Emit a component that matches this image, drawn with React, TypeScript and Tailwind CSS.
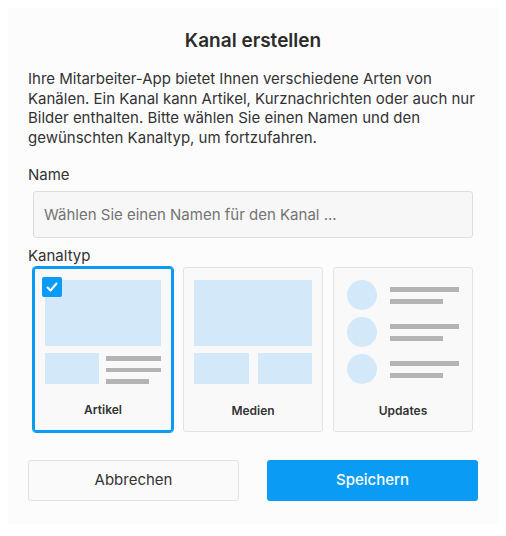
import React from 'react';

const Bar = ({ w }: { w: string }) => <div className={`h-[5px] bg-[#b4b4b4] ${w}`} />;

const ArtikelPreview = () => (
  <div className="flex flex-col gap-[7px]">
    <div className="h-[66px] bg-[#d3e8f8]" />
    <div className="flex gap-[7px] h-[31px]">
      <div className="w-[54px] bg-[#d3e8f8]" />
      <div className="flex-1 flex flex-col gap-[7px] pt-[3px]">
        <Bar w="w-full" />
        <Bar w="w-full" />
        <Bar w="w-[43px]" />
      </div>
    </div>
  </div>
);

const MedienPreview = () => (
  <div className="flex flex-col gap-[7px]">
    <div className="h-[66px] bg-[#d3e8f8]" />
    <div className="flex gap-[9px] h-[31px]">
      <div className="flex-1 bg-[#d3e8f8]" />
      <div className="flex-1 bg-[#d3e8f8]" />
    </div>
  </div>
);

const UpdatesPreview = () => (
  <div className="flex flex-col gap-[7px] pl-[3px] h-[104px]">
    {[0, 1, 2].map((i) => (
      <div key={i} className="flex items-start gap-[13px] h-[30px]">
        <div className="w-[30px] h-[30px] rounded-full bg-[#d3e8f8]" />
        <div className="flex flex-col gap-[7px] pt-[7px]">
          <Bar w="w-[69px]" />
          <Bar w="w-[53px]" />
        </div>
      </div>
    ))}
  </div>
);

export default function App() {
  const cards = [
    { label: 'Artikel', preview: <ArtikelPreview />, selected: true },
    { label: 'Medien', preview: <MedienPreview />, selected: false },
    { label: 'Updates', preview: <UpdatesPreview />, selected: false },
  ];

  return (
    <div className="w-[506px] h-[536px] bg-white p-2 font-['Inter',sans-serif] text-[#333]">
      <div className="w-[490px] h-[516px] bg-[#fcfcfc] px-5 pt-[21px]">
        <h1 className="text-center text-[19px] leading-6 font-semibold text-[#2b2b2b]">Kanal erstellen</h1>

        <p className="mt-4 text-[15px] leading-[19.5px] whitespace-nowrap">
          Ihre Mitarbeiter-App bietet Ihnen verschiedene Arten von
          <br />
          Kanälen. Ein Kanal kann Artikel, Kurznachrichten oder auch nur
          <br />
          Bilder enthalten. Bitte wählen Sie einen Namen und den
          <br />
          gewünschten Kanaltyp, um fortzufahren.
        </p>

        <div className="mt-[18px] text-[15px] leading-5">Name</div>
        <div className="mx-[5px] mt-[6px]">
          <input
            className="w-full h-[47px] rounded-[3px] border border-[#dedede] bg-[#f7f7f7] px-[10px] text-[15px] outline-none placeholder:text-[#737373]"
            placeholder="Wählen Sie einen Namen für den Kanal ..."
          />
        </div>

        <div className="mt-2 text-[15px] leading-5">Kanaltyp</div>
        <div className="mx-[5px] mt-px grid grid-cols-3 gap-[10px]">
          {cards.map((card) => (
            <div
              key={card.label}
              className={`relative h-[165px] rounded-[3px] bg-[#f9f9f9] px-[10px] pt-3 flex flex-col ${
                card.selected ? 'border-[2px] border-[#0a9cf5] outline outline-1 outline-[#0a9cf5] px-[9px] pt-[11px]' : 'border border-[#e2e2e2]'
              }`}
            >
              {card.preview}
              <div className="mt-auto mb-[11px] text-center text-[12px] font-semibold text-[#333]">{card.label}</div>
              {card.selected && (
                <div className="absolute left-[7px] top-[8px] w-5 h-5 rounded-[2px] bg-[#0a9cf5] flex items-center justify-center">
                  <svg width="14" height="14" viewBox="0 0 14 14" fill="none">
                    <path d="M2.5 7.5 L5.5 10.5 L11.5 3.5" stroke="white" strokeWidth="2" strokeLinecap="round" strokeLinejoin="round" />
                  </svg>
                </div>
              )}
            </div>
          ))}
        </div>

        <div className="mt-[28px] flex justify-between">
          <button className="w-[211px] h-[41px] rounded-[3px] border border-[#e2e2e2] bg-[#fafafa] text-[15px] text-[#333]">
            Abbrechen
          </button>
          <button className="w-[211px] h-[41px] rounded-[3px] bg-[#0a9cf5] text-[15px] font-medium text-white">
            Speichern
          </button>
        </div>
      </div>
    </div>
  );
}
